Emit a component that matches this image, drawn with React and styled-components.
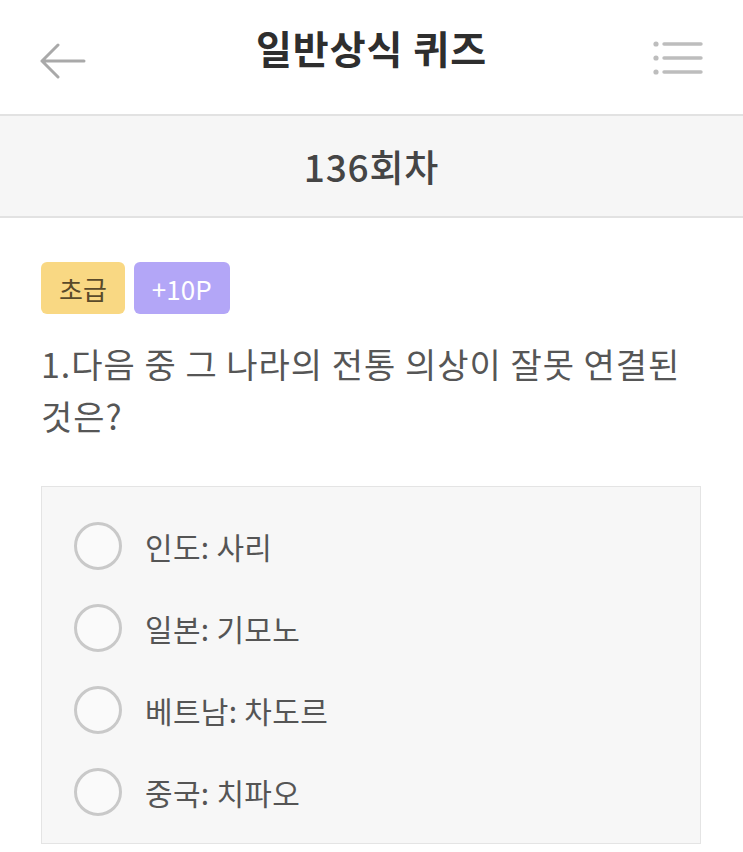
import React from 'react';
import styled, { createGlobalStyle } from 'styled-components';

const GlobalStyle = createGlobalStyle`
  html, body {
    margin: 0;
    padding: 0;
    background: #ffffff;
  }
  body {
    font-family: "Noto Sans CJK KR", "Noto Sans", sans-serif;
    -webkit-font-smoothing: antialiased;
  }
`;

const Page = styled.div`
  width: 743px;
  min-height: 852px;
  background: #ffffff;
`;

const Header = styled.header`
  height: 114px;
  display: grid;
  grid-template-columns: 120px 1fr 120px;
  align-items: center;
  border-bottom: 2px solid #e2e2e2;
`;

const IconButton = styled.button`
  border: 0;
  background: none;
  padding: 0;
  display: flex;
  justify-content: ${(p) => (p.$right ? 'flex-end' : 'flex-start')};
  padding-left: ${(p) => (p.$right ? '0' : '38px')};
  padding-right: ${(p) => (p.$right ? '40px' : '0')};
  margin-top: ${(p) => (p.$right ? '2px' : '8px')};
  cursor: pointer;
`;

const Title = styled.h1`
  margin: 0 0 20px;
  text-align: center;
  font-size: 39px;
  font-weight: 700;
  color: #2e2e2e;
  letter-spacing: 1px;
`;

const RoundBar = styled.div`
  height: 100px;
  background: #f6f6f6;
  border-bottom: 2px solid #e2e2e2;
  display: flex;
  align-items: center;
  justify-content: center;
  font-size: 37px;
  font-weight: 500;
  color: #454545;
  letter-spacing: 0.8px;
`;

const Content = styled.main`
  padding: 44px 41px 0 41px;
`;

const BadgeRow = styled.div`
  display: flex;
  gap: 9px;
`;

const Badge = styled.span`
  height: 52px;
  padding: 0 ${(p) => p.$pad}px;
  display: inline-flex;
  align-items: center;
  border-radius: 6px;
  font-size: 26px;
  background: ${(p) => p.$bg};
  color: ${(p) => p.$color};
`;

const Question = styled.p`
  margin: 24px 0 44px;
  font-size: 34px;
  line-height: 52px;
  color: #565656;
  letter-spacing: 1px;
  word-break: keep-all;
`;

const OptionBox = styled.ul`
  list-style: none;
  margin: 0;
  padding: 18px 32px 10px;
  width: 660px;
  box-sizing: border-box;
  background: #f7f7f7;
  border: 1px solid #e4e4e4;
`;

const Option = styled.li`
  height: 82px;
  display: flex;
  align-items: center;
  gap: 23px;
  font-size: 30px;
  color: #555555;
  letter-spacing: 0.3px;
`;

const Radio = styled.span`
  width: 48px;
  height: 48px;
  box-sizing: border-box;
  border-radius: 50%;
  border: 3px solid #c9c9c9;
  background: #fafafa;
  flex-shrink: 0;
`;

const BackIcon = () => (
  <svg width="48" height="36" viewBox="0 0 48 36" fill="none">
    <path
      d="M46 18H4M20 2L4 18l16 16"
      stroke="#a9a9a9"
      strokeWidth="3"
      strokeLinecap="round"
      strokeLinejoin="round"
    />
  </svg>
);

const MenuIcon = () => (
  <svg width="50" height="34" viewBox="0 0 50 34" fill="none">
    {[3, 17, 31].map((y) => (
      <g key={y}>
        <circle cx="3" cy={y} r="2.6" fill="#bdbdbd" />
        <path d={`M11 ${y}H48`} stroke="#bdbdbd" strokeWidth="3.4" strokeLinecap="round" />
      </g>
    ))}
  </svg>
);

const options = ['인도: 사리', '일본: 기모노', '베트남: 차도르', '중국: 치파오'];

export default function App() {
  return (
    <Page>
      <GlobalStyle />
      <Header>
        <IconButton aria-label="뒤로">
          <BackIcon />
        </IconButton>
        <Title>일반상식 퀴즈</Title>
        <IconButton $right aria-label="메뉴">
          <MenuIcon />
        </IconButton>
      </Header>
      <RoundBar>136회차</RoundBar>
      <Content>
        <BadgeRow>
          <Badge $bg="#f9d883" $color="#5a4a2a" $pad={18}>초급</Badge>
          <Badge $bg="#b3a6f7" $color="#ffffff" $pad={18}>+10P</Badge>
        </BadgeRow>
        <Question>1.다음 중 그 나라의 전통 의상이 잘못 연결된 것은?</Question>
        <OptionBox>
          {options.map((o) => (
            <Option key={o}>
              <Radio />
              {o}
            </Option>
          ))}
        </OptionBox>
      </Content>
    </Page>
  );
}
